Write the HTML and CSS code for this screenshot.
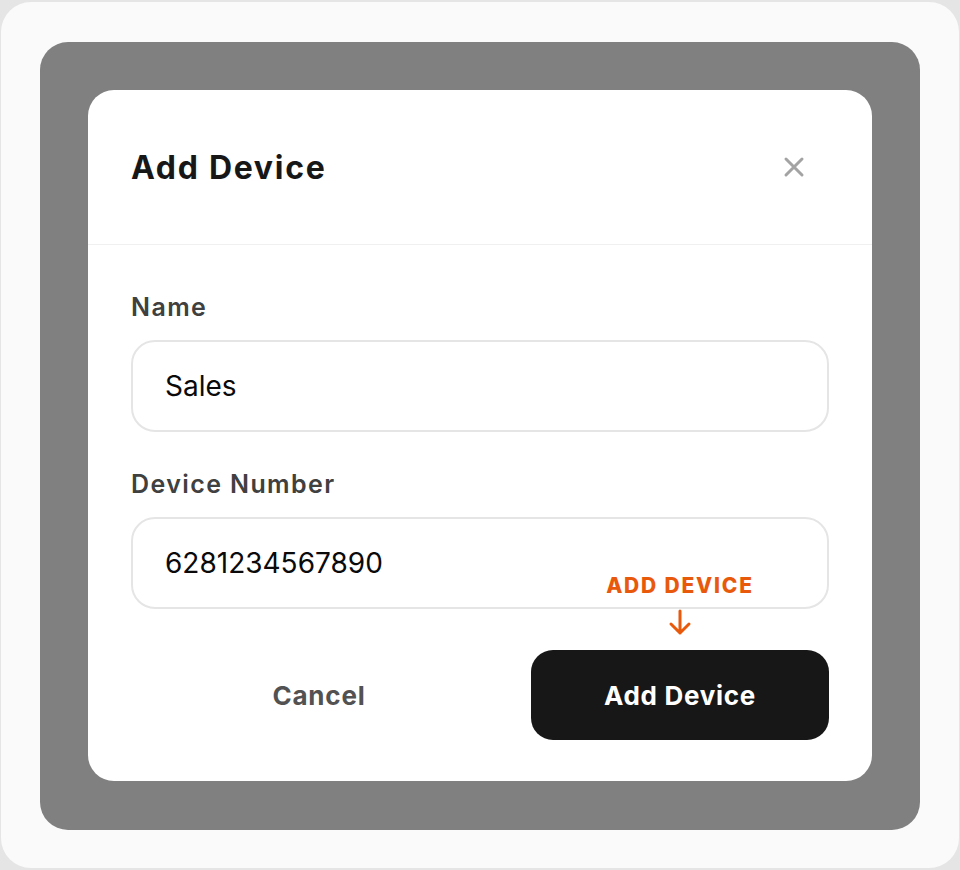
FILE: index.html
```html
<!DOCTYPE html>
<html lang="en">
<head>
    <meta charset="UTF-8">
    <meta name="viewport" content="width=device-width, initial-scale=1.0">
    <title>Add Device</title>
    <link rel="stylesheet" href="styles.css">
</head>
<body>
    <div class="frame">
        <!-- Backdrop -->
        <div class="backdrop">
            <div class="modal">
                <div class="modal-header">
                    <h2>Add Device</h2>
                    <button class="close-btn" aria-label="Close">
                        <svg width="22" height="22" viewBox="0 0 22 22" fill="none" stroke="currentColor" stroke-width="3" stroke-linecap="round">
                            <path d="M3 3 L19 19 M19 3 L3 19"/>
                        </svg>
                    </button>
                </div>

                <div class="modal-body">
                    <label class="field">
                        <span class="field-label">Name</span>
                        <input class="field-input" type="text" value="Sales">
                    </label>

                    <label class="field">
                        <span class="field-label">Device Number</span>
                        <input class="field-input" type="text" value="6281234567890">
                    </label>

                    <div class="actions">
                        <button class="btn-cancel">Cancel</button>
                        <div class="primary-wrap">
                            <div class="hint">
                                <span>ADD DEVICE</span>
                                <svg width="28" height="28" viewBox="0 0 28 28" fill="none" stroke="currentColor" stroke-width="3" stroke-linecap="round" stroke-linejoin="round">
                                    <path d="M14 3 V25 M5 16 L14 25 L23 16"/>
                                </svg>
                            </div>
                            <button class="btn-primary">Add Device</button>
                        </div>
                    </div>
                </div>
            </div>
        </div>
    </div>
</body>
</html>
```

FILE: styles.css
```css
* {
    margin: 0;
    padding: 0;
    box-sizing: border-box;
}

body {
    font-family: 'Inter', 'Liberation Sans', sans-serif;
    background-color: #e5e5e5;
    padding: 2px 1px;
    height: 870px;
    overflow: hidden;
}

/* Outer frame */
.frame {
    background-color: #fafafa;
    border-radius: 30px;
    height: 866px;
    padding: 40px 39px;
}

/* Backdrop */
.backdrop {
    background-color: #808080;
    border-radius: 28px;
    padding: 48px 48px 49px;
}

/* Modal */
.modal {
    background-color: #fff;
    border-radius: 26px;
}

.modal-header {
    display: flex;
    justify-content: space-between;
    align-items: center;
    padding: 0 59px 0 43px;
    height: 155px;
    border-bottom: 1px solid #f0f0f0;
}

.modal-header h2 {
    font-size: 32px;
    font-weight: 700;
    color: #171717;
    letter-spacing: 1.7px;
}

.close-btn {
    border: none;
    background: none;
    color: #a3a3a3;
    width: 38px;
    height: 38px;
    display: flex;
    align-items: center;
    justify-content: center;
    cursor: pointer;
}

.modal-body {
    padding: 46px 43px 41px;
    display: flex;
    flex-direction: column;
}

.field {
    display: flex;
    flex-direction: column;
    gap: 17px;
    margin-bottom: 36px;
}

.field + .field {
    margin-bottom: 41px;
}

.field-label {
    font-size: 25px;
    line-height: 32px;
    font-weight: 600;
    color: #404040;
    letter-spacing: 1.4px;
}

.field-input {
    height: 92px;
    border: 2px solid #e5e5e5;
    border-radius: 24px;
    padding: 0 32px;
    font-family: inherit;
    font-size: 28px;
    color: #0a0a0a;
    outline: none;
}

/* Actions */
.actions {
    display: flex;
    gap: 24px;
    height: 90px;
}

.btn-cancel {
    flex: 1;
    border: none;
    background: none;
    font-family: inherit;
    font-size: 26px;
    font-weight: 700;
    color: #525252;
    letter-spacing: 0.8px;
    cursor: pointer;
}

.primary-wrap {
    position: relative;
    width: 298px;
}

.btn-primary {
    width: 100%;
    height: 100%;
    border: none;
    border-radius: 22px;
    background-color: #171717;
    color: #fff;
    font-family: inherit;
    font-size: 26px;
    font-weight: 700;
    letter-spacing: 0.7px;
    cursor: pointer;
}

.hint {
    position: absolute;
    left: 0;
    right: 0;
    bottom: calc(100% + 14px);
    display: flex;
    flex-direction: column;
    align-items: center;
    gap: 10px;
    color: #e8590c;
}

.hint span {
    font-size: 21px;
    font-weight: 800;
    letter-spacing: 1.8px;
    line-height: 24px;
}
```
